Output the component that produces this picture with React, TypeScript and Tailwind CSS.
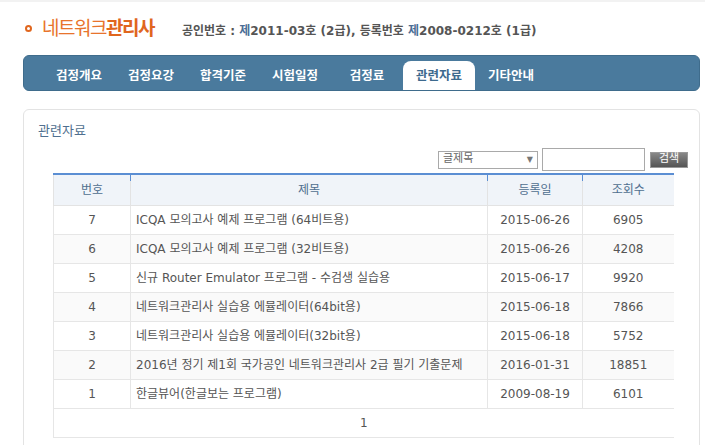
const font = { fontFamily: '"DejaVu Sans", "Noto Sans CJK KR", sans-serif' }

const tabs = ['검정개요', '검정요강', '합격기준', '시험일정', '검정료', '관련자료', '기타안내']

const rows = [
  { no: 7, title: 'ICQA 모의고사 예제 프로그램 (64비트용)', date: '2015-06-26', views: 6905 },
  { no: 6, title: 'ICQA 모의고사 예제 프로그램 (32비트용)', date: '2015-06-26', views: 4208 },
  { no: 5, title: '신규 Router Emulator 프로그램 - 수검생 실습용', date: '2015-06-17', views: 9920 },
  { no: 4, title: '네트워크관리사 실습용 에뮬레이터(64bit용)', date: '2015-06-18', views: 7866 },
  { no: 3, title: '네트워크관리사 실습용 에뮬레이터(32bit용)', date: '2015-06-18', views: 5752 },
  { no: 2, title: '2016년 정기 제1회 국가공인 네트워크관리사 2급 필기 기출문제', date: '2016-01-31', views: 18851 },
  { no: 1, title: '한글뷰어(한글보는 프로그램)', date: '2009-08-19', views: 6101 },
]

function Header() {
  return (
    <div className="flex items-end h-[55px] pb-[17px] border-t-2 border-[#f2f2f2]">
      <div className="flex items-center ml-[25px]">
        <span className="w-[7px] h-[7px] rounded-full border-[2px] border-[#e0661e]" />
        <span className="ml-[10px] text-[19px] tracking-[-1.5px] leading-none text-[#e8742c]">
          네트워크<span className="font-bold text-[#e0661e]">관리사</span>
        </span>
      </div>
      <div className="ml-[28px] mb-[-2px] text-[12px] font-bold text-[#555]">
        공인번호 : <span className="text-[#4b6e96]">제</span>2011-03호 (2급), 등록번호{' '}
        <span className="text-[#4b6e96]">제</span>2008-0212호 (1급)
      </div>
    </div>
  )
}

function Nav() {
  return (
    <div className="ml-[23px] mr-[5px] h-[36px] rounded-[6px] bg-[#4a7a9d] border border-[#3f6c8c] flex items-end pl-[19px]">
      {tabs.map((t) => {
        const active = t === '관련자료'
        return (
          <div
            key={t}
            className={`w-[72px] h-[29px] pt-[2px] flex items-center justify-center text-[12.5px] font-bold ${
              active ? 'bg-white text-[#3d6a8e] rounded-t-[8px]' : 'text-white'
            }`}
          >
            {t}
          </div>
        )
      })}
    </div>
  )
}

function Search() {
  return (
    <div className="flex items-center justify-end pr-[11px] h-[23px] mt-[8px]">
      <div className="w-[100px] h-[18px] border border-[#a9a9a9] flex items-center justify-between px-[4px] text-[11px] text-[#666]">
        <span>글제목</span>
        <span className="text-[8px] text-[#777]">▼</span>
      </div>
      <div className="ml-[4px] w-[103px] h-[23px] border border-[#a9a9a9] bg-white" />
      <div className="ml-[5px] w-[38px] h-[16px] bg-gradient-to-b from-[#888] to-[#555] border border-[#999] text-white text-[11px] flex items-center justify-center">
        검색
      </div>
    </div>
  )
}

function Table() {
  return (
    <div className="ml-[29px] mt-[2px]">
      <table className="w-[620px] border-collapse text-[12px] text-[#555] table-fixed">
        <colgroup>
          <col className="w-[77px]" />
          <col className="w-[357px]" />
          <col className="w-[95px]" />
          <col className="w-[91px]" />
        </colgroup>
        <thead>
          <tr className="h-[31px] bg-[#f0f4f9] border-t-2 border-[#5b8ed3] text-[#4f6f8f]">
            {['번호', '제목', '등록일', '조회수'].map((h, i) => (
              <th key={h} className="relative font-normal border-b border-l border-[#e3e3e3]">
                {i > 0 && <span className="absolute left-[-1px] top-0 w-px h-[6px] bg-[#5b8ed3]" />}
                {h}
              </th>
            ))}
          </tr>
        </thead>
        <tbody>
          {rows.map((r, i) => (
            <tr key={r.no} className={`h-[29px] ${i % 2 === 1 ? 'bg-[#fafafa]' : 'bg-white'}`}>
              <td className="text-center border border-[#e6e6e6]">{r.no}</td>
              <td className="pl-[5px] border border-[#e6e6e6] whitespace-nowrap">{r.title}</td>
              <td className="text-center border border-[#e6e6e6]">{r.date}</td>
              <td className="text-center border-y border-l border-[#e6e6e6]">{r.views}</td>
            </tr>
          ))}
          <tr className="h-[29px]">
            <td colSpan={4} className="text-center border-y border-l border-[#e6e6e6]">
              1
            </td>
          </tr>
        </tbody>
      </table>
    </div>
  )
}

export default function App() {
  return (
    <div className="w-[705px] h-[445px] overflow-hidden bg-white" style={font}>
      <Header />
      <Nav />
      <div className="mt-[18px] ml-[23px] mr-[5px] h-[400px] rounded-[6px] border border-[#e3e3e3] pt-[12px]">
        <div className="pl-[14px] text-[13px] text-[#4f6f8f] leading-[18px]">관련자료</div>
        <Search />
        <Table />
      </div>
    </div>
  )
}
